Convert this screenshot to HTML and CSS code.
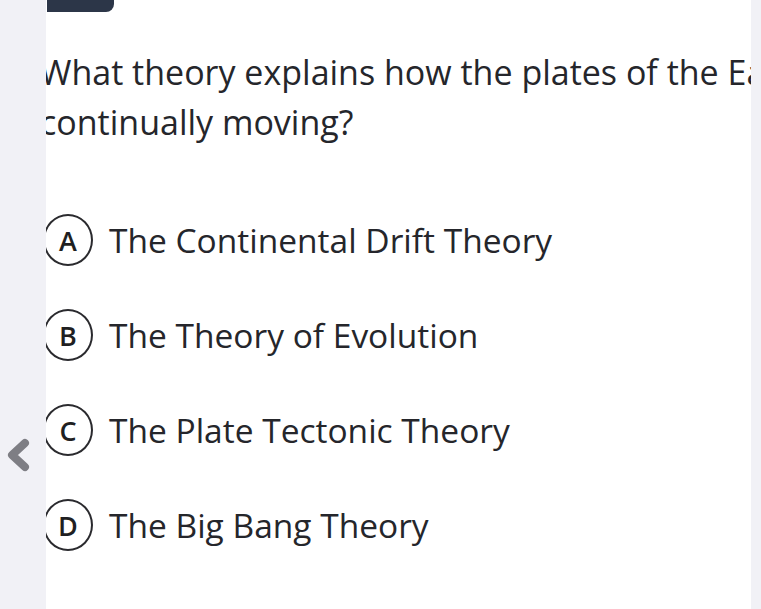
FILE: index.html
```html
<!DOCTYPE html>
<html>
<head>
<meta charset="utf-8">
<link rel="stylesheet" href="styles.css">
</head>
<body>
<div class="page">
  <aside class="side-left">
    <button class="nav-prev" aria-label="Previous">
      <svg width="26" height="34" viewBox="0 0 26 34"><path d="M20 5 L7 17 L20 29" fill="none" stroke="#7e7e84" stroke-width="8" stroke-linecap="round" stroke-linejoin="round"/></svg>
    </button>
  </aside>
  <main class="panel">
    <div class="top-tab"></div>
    <div class="question">
      <div class="q-line">What theory explains how the plates of the Earth are</div>
      <div class="q-line">continually moving?</div>
    </div>
    <ul class="options">
      <li class="option"><span class="badge">A</span><span class="opt-text">The Continental Drift Theory</span></li>
      <li class="option"><span class="badge">B</span><span class="opt-text">The Theory of Evolution</span></li>
      <li class="option"><span class="badge">C</span><span class="opt-text">The Plate Tectonic Theory</span></li>
      <li class="option"><span class="badge">D</span><span class="opt-text">The Big Bang Theory</span></li>
    </ul>
  </main>
  <aside class="side-right"></aside>
</div>
</body>
</html>
```
FILE: styles.css
```css
html, body {
  margin: 0;
  padding: 0;
  background: #f1f1f6;
  font-family: "Open Sans", "Noto Sans", sans-serif;
  color: #25262b;
}
.page {
  display: flex;
  width: 761px;
  height: 609px;
  overflow: hidden;
}
.side-left {
  width: 46px;
  flex: none;
  position: relative;
}
.nav-prev {
  position: absolute;
  left: 5px;
  top: 438px;
  padding: 0;
  border: 0;
  background: none;
  display: block;
}
.nav-prev svg { display: block; }
.panel {
  width: 705px;
  flex: none;
  background: #ffffff;
  overflow: hidden;
}
.side-right {
  flex: 1;
}
.top-tab {
  width: 67px;
  height: 12px;
  margin-left: 1px;
  background: #2c3648;
  border-bottom-right-radius: 8px;
}
.question {
  margin-top: 35px;
  margin-left: -6px;
  font-size: 34px;
  line-height: 50px;
  white-space: nowrap;
}
.options {
  list-style: none;
  margin: 67px 0 0 0;
  padding: 0;
  display: flex;
  flex-direction: column;
  gap: 43px;
}
.option {
  display: flex;
  align-items: center;
  height: 52px;
}
.badge {
  box-sizing: border-box;
  width: 50px;
  height: 52px;
  margin-left: -3px;
  border: 2px solid #2a2a2e;
  border-radius: 50%;
  display: flex;
  align-items: center;
  justify-content: center;
  font-size: 27px;
  font-weight: 600;
  color: #1f1f22;
  flex: none;
}
.opt-text {
  margin-left: 16px;
  font-size: 33.5px;
  white-space: nowrap;
}
```
